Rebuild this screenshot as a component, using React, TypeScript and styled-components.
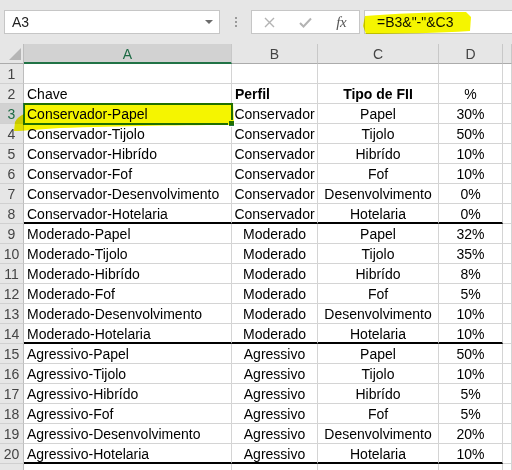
import React from "react";
import styled, { createGlobalStyle } from "styled-components";

const Global = createGlobalStyle`
  html, body { margin: 0; padding: 0; background: #e6e6e6; overflow: hidden; }
  body { font-family: "Liberation Sans", Arial, sans-serif; }
`;

const Page = styled.div`
  width: 512px;
  height: 470px;
  overflow: hidden;
  position: relative;
`;

const TopBar = styled.div`
  height: 44px;
  box-sizing: border-box;
  padding: 10px 0 0 4px;
  display: flex;
  align-items: flex-start;
  background: #e6e6e6;
`;

const NameBox = styled.div`
  width: 216px;
  height: 24px;
  box-sizing: border-box;
  background: #fff;
  border: 1px solid #c6c6c6;
  display: flex;
  align-items: center;
  justify-content: space-between;
  padding-left: 7px;
  font-size: 14px;
  color: #222;
`;

const Arrow = styled.span`
  width: 0;
  height: 0;
  border-left: 4px solid transparent;
  border-right: 4px solid transparent;
  border-top: 4px solid #6b6b6b;
  margin-right: 6px;
`;

const Dots = styled.div`
  width: 31px;
  height: 24px;
  display: flex;
  flex-direction: column;
  align-items: center;
  justify-content: center;
  gap: 2px;
`;

const Dot = styled.span`
  width: 2px;
  height: 2px;
  background: #9a9a9a;
`;

const FxBox = styled.div`
  width: 109px;
  height: 24px;
  box-sizing: border-box;
  background: #fff;
  border: 1px solid #c6c6c6;
  display: flex;
  align-items: center;
`;

const FxSlot = styled.div`
  width: 36px;
  height: 22px;
  display: flex;
  align-items: center;
  justify-content: center;
`;

const FxLabel = styled.span`
  font-family: "Liberation Serif", "Times New Roman", serif;
  font-style: italic;
  font-size: 15px;
  color: #555;
  letter-spacing: -0.5px;
`;

const FormulaInput = styled.div`
  flex: 1;
  margin-left: 4px;
  height: 24px;
  box-sizing: border-box;
  background: #fff;
  border: 1px solid #c6c6c6;
  border-right: none;
  display: flex;
  align-items: center;
  padding-left: 12px;
  font-size: 14px;
  color: #111;
`;

const Sheet = styled.div`
  position: relative;
  display: grid;
  grid-template-columns: 24px 208px 86px 121px 64px 1fr;
  grid-auto-rows: 20px;
  background: #fff;
`;

const Corner = styled.div`
  background: #e6e6e6;
  border-right: 1px solid #bdbdbd;
  border-bottom: 1px solid #ababab;
  box-sizing: border-box;
  position: relative;
`;

const ColHead = styled.div<{ $sel?: boolean }>`
  box-sizing: border-box;
  background: ${(p) => (p.$sel ? "#d2d2d2" : "#e6e6e6")};
  border-right: 1px solid #c8c8c8;
  border-bottom: ${(p) => (p.$sel ? "2px solid #217346" : "1px solid #ababab")};
  color: ${(p) => (p.$sel ? "#1e6b45" : "#444")};
  font-size: 14px;
  display: flex;
  align-items: center;
  justify-content: center;
  padding-top: ${(p) => (p.$sel ? "1px" : "0")};
`;

const RowHead = styled.div<{ $sel?: boolean }>`
  box-sizing: border-box;
  background: ${(p) => (p.$sel ? "#d2d2d2" : "#e6e6e6")};
  border-right: 1px solid #bdbdbd;
  border-bottom: 1px solid #d0d0d0;
  color: ${(p) => (p.$sel ? "#1e6b45" : "#444")};
  font-size: 14px;
  display: flex;
  align-items: flex-end;
  justify-content: center;
  line-height: 16px;
  padding-bottom: 1px;
`;

const Cell = styled.div<{ $align?: string; $bold?: boolean; $thick?: boolean }>`
  box-sizing: border-box;
  border-right: 1px solid #d4d4d4;
  border-bottom: ${(p) => (p.$thick ? "2px solid #000" : "1px solid #d4d4d4")};
  font-size: 14px;
  font-weight: ${(p) => (p.$bold ? 700 : 400)};
  color: #000;
  display: flex;
  align-items: flex-end;
  justify-content: ${(p) =>
    p.$align === "center" ? "center" : p.$align === "right" ? "flex-end" : "flex-start"};
  padding: 0 3px ${(p) => (p.$thick ? "0" : "1px")} 3px;
  line-height: 16px;
  white-space: nowrap;
  overflow: visible;
`;

const Selection = styled.div`
  position: absolute;
  left: 23px;
  top: 59px;
  width: 210px;
  height: 22px;
  box-sizing: border-box;
  border: 2px solid #217346;
  pointer-events: none;
  &::after {
    content: "";
    position: absolute;
    right: -4px;
    bottom: -4px;
    width: 5px;
    height: 5px;
    background: #217346;
    border: 1px solid #fff;
  }
`;

const Marker = styled.svg`
  position: absolute;
  left: 0;
  top: 0;
  width: 512px;
  height: 470px;
  pointer-events: none;
  mix-blend-mode: multiply;
`;

type Row = [string, string, string, string];

const data: Row[] = [
  ["Conservador-Papel", "Conservador", "Papel", "30%"],
  ["Conservador-Tijolo", "Conservador", "Tijolo", "50%"],
  ["Conservador-Hibrído", "Conservador", "Hibrído", "10%"],
  ["Conservador-Fof", "Conservador", "Fof", "10%"],
  ["Conservador-Desenvolvimento", "Conservador", "Desenvolvimento", "0%"],
  ["Conservador-Hotelaria", "Conservador", "Hotelaria", "0%"],
  ["Moderado-Papel", "Moderado", "Papel", "32%"],
  ["Moderado-Tijolo", "Moderado", "Tijolo", "35%"],
  ["Moderado-Hibrído", "Moderado", "Hibrído", "8%"],
  ["Moderado-Fof", "Moderado", "Fof", "5%"],
  ["Moderado-Desenvolvimento", "Moderado", "Desenvolvimento", "10%"],
  ["Moderado-Hotelaria", "Moderado", "Hotelaria", "10%"],
  ["Agressivo-Papel", "Agressivo", "Papel", "50%"],
  ["Agressivo-Tijolo", "Agressivo", "Tijolo", "10%"],
  ["Agressivo-Hibrído", "Agressivo", "Hibrído", "5%"],
  ["Agressivo-Fof", "Agressivo", "Fof", "5%"],
  ["Agressivo-Desenvolvimento", "Agressivo", "Desenvolvimento", "20%"],
  ["Agressivo-Hotelaria", "Agressivo", "Hotelaria", "10%"],
];

export default function App() {
  const rows: React.ReactNode[] = [];
  rows.push(
    <React.Fragment key="r1">
      <RowHead>1</RowHead>
      <Cell />
      <Cell />
      <Cell />
      <Cell />
      <Cell />
    </React.Fragment>
  );
  rows.push(
    <React.Fragment key="r2">
      <RowHead>2</RowHead>
      <Cell>Chave</Cell>
      <Cell $bold>Perfil</Cell>
      <Cell $bold $align="center">Tipo de FII</Cell>
      <Cell $align="center">%</Cell>
      <Cell />
    </React.Fragment>
  );
  data.forEach((r, i) => {
    const n = i + 3;
    const thick = n === 8 || n === 14 || n === 20;
    rows.push(
      <React.Fragment key={n}>
        <RowHead $sel={n === 3}>{n}</RowHead>
        <Cell $thick={thick}>{r[0]}</Cell>
        <Cell $thick={thick} $align="center">{r[1]}</Cell>
        <Cell $thick={thick} $align="center">{r[2]}</Cell>
        <Cell $thick={thick} $align="center">{r[3]}</Cell>
        <Cell />
      </React.Fragment>
    );
  });
  rows.push(
    <React.Fragment key="r21">
      <RowHead />
      <Cell />
      <Cell />
      <Cell />
      <Cell />
      <Cell />
    </React.Fragment>
  );

  return (
    <Page>
      <Global />
      <TopBar>
        <NameBox>
          A3
          <Arrow />
        </NameBox>
        <Dots>
          <Dot />
          <Dot />
          <Dot />
        </Dots>
        <FxBox>
          <FxSlot>
            <svg width="11" height="11" viewBox="0 0 11 11">
              <path d="M1 1 L10 10 M10 1 L1 10" stroke="#b3b3b3" strokeWidth="1.4" fill="none" />
            </svg>
          </FxSlot>
          <FxSlot>
            <svg width="13" height="11" viewBox="0 0 13 11">
              <path d="M1 6 L4.5 9.5 L12 1.5" stroke="#b3b3b3" strokeWidth="2" fill="none" />
            </svg>
          </FxSlot>
          <FxSlot>
            <FxLabel>fx</FxLabel>
          </FxSlot>
        </FxBox>
        <FormulaInput>=B3&amp;"-"&amp;C3</FormulaInput>
      </TopBar>
      <Sheet>
        <Corner>
          <svg
            width="24"
            height="20"
            viewBox="0 0 24 20"
            style={{ position: "absolute", left: 0, top: 0 }}
          >
            <path d="M9 16 L21 4 L21 16 Z" fill="#b5b5b5" />
          </svg>
        </Corner>
        <ColHead $sel>A</ColHead>
        <ColHead>B</ColHead>
        <ColHead>C</ColHead>
        <ColHead>D</ColHead>
        <ColHead />
        {rows}
        <Selection />
      </Sheet>
      <Marker viewBox="0 0 512 470">
        <path
          d="M24 103 L233 103 L234 125 C190 125 120 126 60 128 C40 129 25 131 14 131 L15 122 C17 118 20 116 24 114 Z"
          fill="#f5f500"
        />
        <path
          d="M365 16 C392 14 430 12 466 12 L471 17 L470 31 C440 33 400 34 366 34 L363 26 Z"
          fill="#f5f500"
        />
      </Marker>
    </Page>
  );
}
